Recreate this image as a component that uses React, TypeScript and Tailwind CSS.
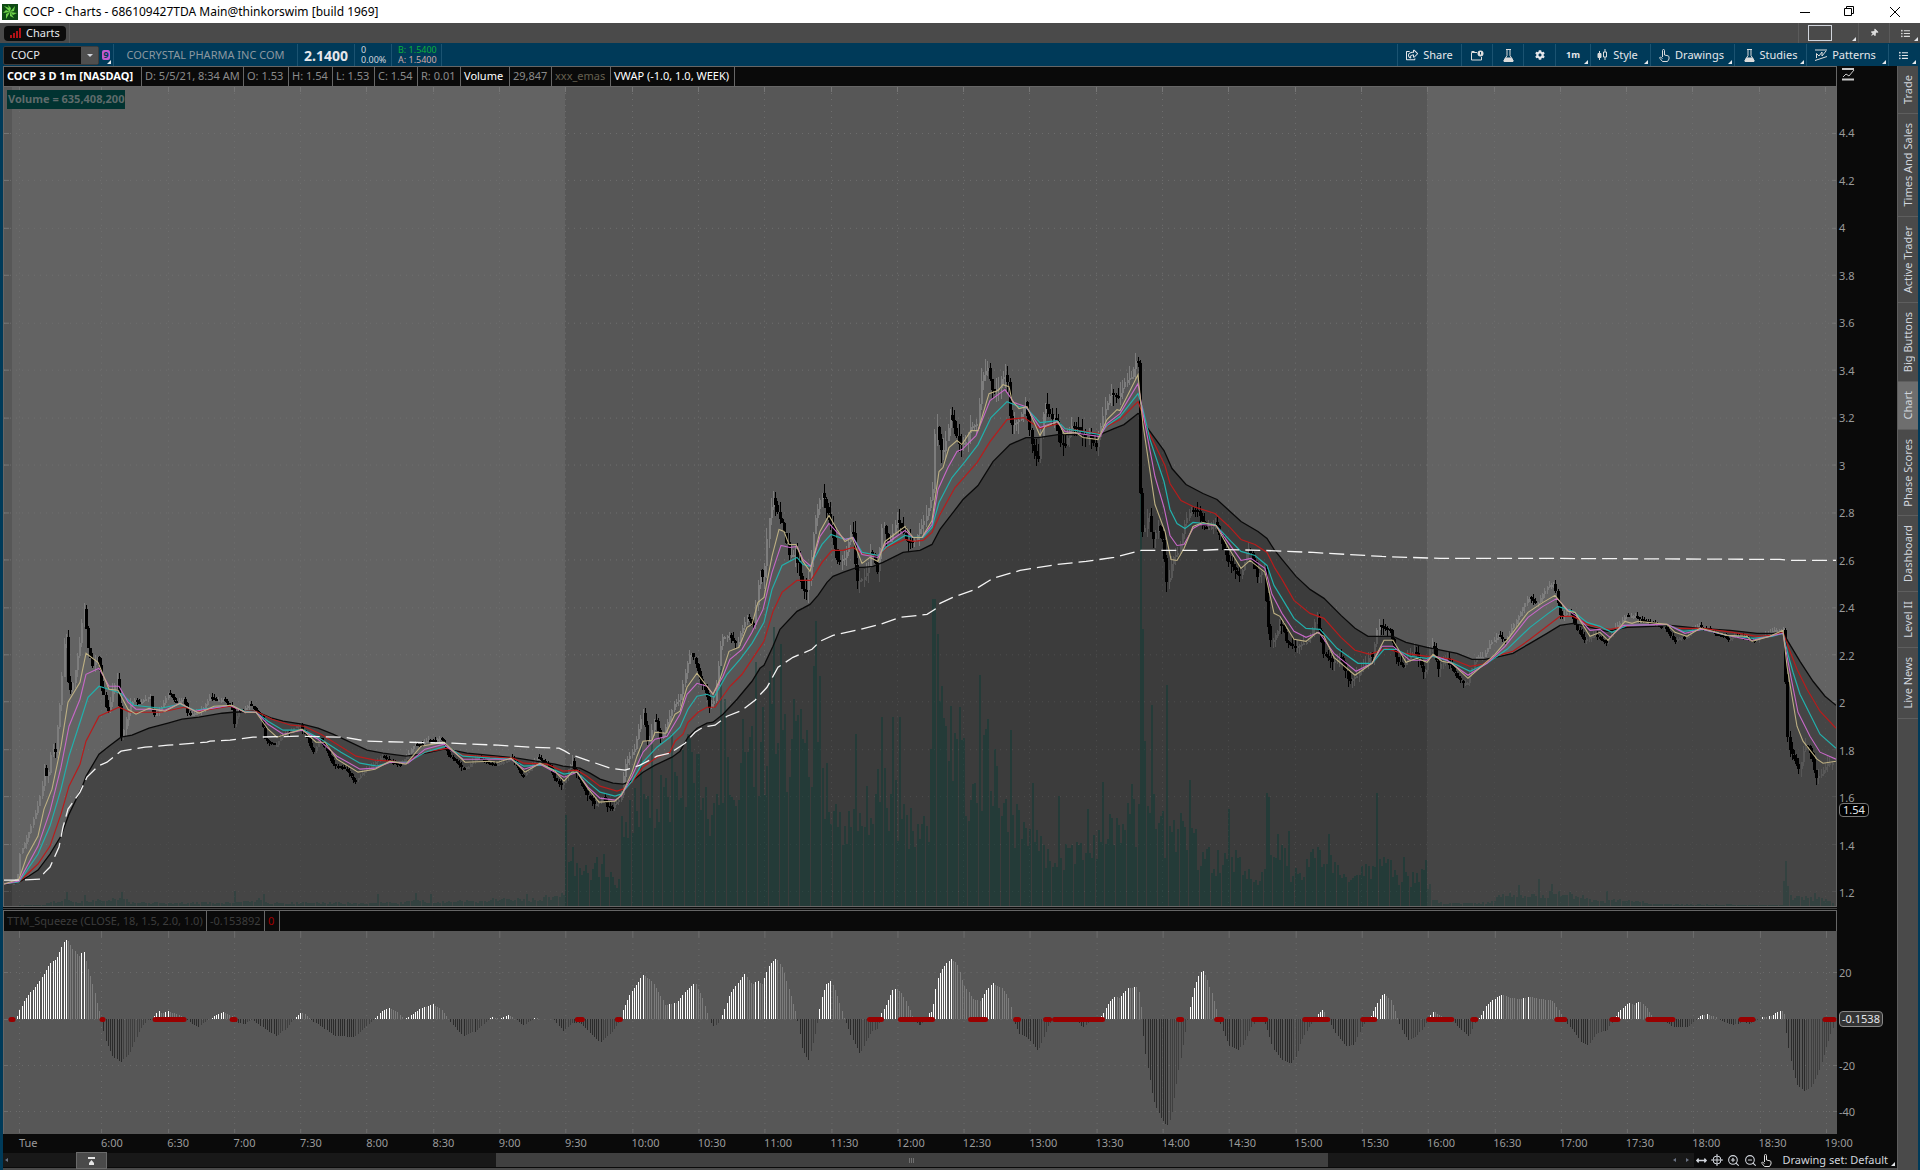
import React from 'react';
import {
  FaCog,
  FaListUl,
  FaRegHandPointUp,
  FaRegShareSquare,
  FaThumbtack,
  FaArrowsAltH,
} from 'react-icons/fa';
import { ZoomIn, ZoomOut } from 'lucide-react';

// chart series, x / y in chart space
const EMA_SLOW =
  '4,885 19,883 29,877 38,871 50,855 61,837 69,815 82,788 86,777 99,755 109,747 121,738 132,736 149,729 168,724 182,720 199,718 222,714 233,713 253,712 260,714 272,719 283,722 302,725 318,729 333,735 348,742 367,751 383,754 406,757 421,755 444,750 452,751 467,754 498,757 517,759 536,762 555,765 563,767 572,768 580,769 590,774 600,780 613,784 623,785 632,782 643,773 655,766 672,758 680,752 688,738 697,729 707,724 713,723 723,715 737,700 752,682 760,669 764,666 773,647 780,630 797,612 810,605 818,596 827,583 833,577 843,573 857,568 863,568 873,567 883,563 903,553 920,551 932,545 940,530 950,517 963,500 978,486 993,462 1010,445 1026,438 1038,438 1058,435 1079,435 1100,435 1114,429 1124,425 1138,414 1141,415 1145,425 1164,451 1172,469 1186,485 1203,494 1217,500 1229,511 1241,522 1258,532 1267,539 1274,550 1282,560 1296,577 1310,590 1324,599 1341,616 1355,629 1368,637 1393,637 1406,643 1427,648 1437,650 1457,654 1472,660 1485,660 1500,657 1513,654 1530,644 1547,634 1560,626 1573,624 1587,627 1607,632 1627,628 1653,627 1670,626 1700,629 1730,631 1757,634 1773,634 1783,633 1788,642 1800,662 1813,682 1825,697 1836,706';
const EMA_RED =
  '4,885 19,883 38,865 50,847 61,815 69,787 80,765 86,742 99,717 119,708 130,713 161,713 184,708 199,712 230,707 245,712 256,712 272,720 291,726 304,727 321,735 337,745 356,757 375,761 406,763 425,753 448,749 463,756 494,758 513,759 524,764 547,765 563,772 577,771 587,777 600,787 617,792 623,790 632,783 643,768 657,758 670,753 675,742 683,735 688,723 698,713 707,708 715,708 730,687 742,675 752,660 764,642 773,612 782,593 797,581 811,581 822,563 832,551 843,551 853,548 862,554 878,556 887,548 905,540 913,542 923,541 932,533 940,515 955,488 977,463 990,442 1007,420 1024,418 1040,429 1058,424 1065,429 1100,434 1107,427 1120,420 1138,402 1141,410 1145,425 1165,466 1170,484 1181,501 1193,507 1215,514 1229,527 1241,540 1255,545 1267,553 1275,569 1282,580 1294,601 1310,614 1324,619 1341,638 1355,651 1370,655 1386,649 1399,653 1413,655 1427,657 1433,657 1452,660 1470,667 1483,665 1495,657 1513,652 1530,640 1547,627 1560,617 1573,617 1590,626 1610,630 1630,626 1667,625 1677,629 1703,629 1733,633 1757,637 1773,636 1783,633 1788,647 1797,670 1807,690 1820,712 1836,729';
const EMA_CYAN =
  '4,885 19,883 38,855 50,827 61,790 69,757 80,723 88,698 99,687 115,692 122,695 134,706 161,709 180,705 195,711 230,706 245,712 256,713 268,722 283,731 304,731 321,740 341,753 360,764 377,767 390,763 408,763 425,753 446,747 463,757 490,759 511,760 524,767 543,766 564,775 577,773 588,783 600,793 615,797 621,795 632,782 643,763 657,748 670,738 680,728 688,710 697,697 707,695 714,698 727,675 740,660 752,644 764,623 772,590 782,566 797,558 803,565 810,567 822,545 831,535 845,540 853,538 862,553 878,556 887,547 905,536 913,538 923,538 932,528 939,503 952,478 965,462 978,445 991,418 1007,402 1019,407 1026,408 1040,423 1057,421 1065,429 1100,435 1107,426 1120,417 1138,394 1143,410 1150,440 1164,482 1170,510 1177,524 1185,529 1193,523 1215,525 1231,542 1241,552 1255,556 1267,566 1274,586 1282,599 1294,619 1306,629 1320,630 1337,649 1358,664 1372,664 1384,650 1396,650 1410,657 1427,659 1433,657 1447,661 1470,672 1487,664 1507,650 1530,628 1547,615 1558,607 1573,612 1587,623 1600,627 1612,633 1627,626 1667,625 1683,632 1703,630 1727,636 1753,639 1772,637 1783,634 1788,655 1793,673 1800,695 1810,715 1820,735 1836,749';
const EMA_PINK =
  '4,885 19,882 38,847 50,812 61,768 69,727 80,700 86,675 99,669 109,687 119,687 128,703 136,710 149,710 165,711 180,704 195,712 230,706 245,713 256,713 268,725 283,735 302,731 318,740 337,757 360,770 375,769 390,763 408,764 425,750 444,745 463,760 511,760 524,770 540,765 564,778 577,773 588,788 600,799 615,801 621,797 632,777 643,753 655,740 667,737 680,715 687,695 697,684 707,687 713,695 723,677 730,660 742,650 752,633 763,610 772,573 781,546 790,548 797,547 803,560 811,567 820,537 829,524 837,533 845,540 853,538 862,555 878,558 885,545 905,531 913,538 922,538 932,525 938,490 948,468 957,452 962,450 976,436 990,401 1005,390 1014,403 1026,407 1040,428 1057,422 1065,432 1100,437 1107,424 1120,414 1138,384 1143,414 1155,477 1164,508 1170,536 1177,546 1184,545 1193,529 1200,525 1216,526 1231,547 1241,561 1251,559 1265,569 1272,595 1282,614 1294,632 1306,638 1319,633 1334,654 1356,672 1372,664 1382,647 1393,647 1410,661 1427,661 1433,656 1447,661 1468,676 1487,664 1505,647 1528,618 1543,607 1557,599 1568,611 1577,617 1590,631 1600,630 1610,638 1623,626 1667,625 1685,634 1702,630 1727,636 1752,641 1783,634 1787,657 1792,683 1798,713 1810,737 1820,753 1836,760';
const EMA_FAST =
  '4,885 19,880 27,857 38,837 44,810 52,790 61,747 68,703 80,683 86,654 98,663 109,690 118,691 128,710 136,715 149,709 165,712 180,704 199,714 214,707 232,706 245,713 256,713 268,730 277,738 302,730 316,743 325,743 337,760 358,773 375,770 390,762 406,765 421,747 444,743 465,763 490,762 498,763 511,759 525,773 540,764 555,772 564,782 572,773 577,773 587,788 599,803 615,802 622,795 632,773 637,757 643,742 652,741 655,733 666,734 675,715 680,712 687,688 697,674 713,695 720,680 729,652 739,648 747,628 752,625 758,603 764,598 772,557 779,530 784,532 789,545 796,545 803,562 810,572 820,532 829,516 837,530 845,542 852,538 862,564 870,558 878,562 885,542 905,527 913,538 922,538 932,521 939,472 943,468 949,448 957,441 962,445 971,431 978,431 989,394 998,391 1003,385 1009,387 1012,401 1019,409 1027,407 1040,436 1045,427 1058,422 1064,434 1076,433 1083,438 1098,440 1107,420 1117,410 1120,411 1138,375 1143,425 1155,505 1165,532 1171,560 1177,561 1184,549 1193,527 1203,523 1216,526 1229,549 1241,569 1250,561 1265,573 1274,614 1280,617 1294,640 1306,642 1317,633 1324,637 1334,658 1355,676 1372,664 1384,641 1393,641 1406,663 1417,659 1427,663 1433,655 1442,662 1452,664 1468,679 1477,671 1495,655 1510,637 1528,613 1543,603 1555,596 1568,612 1575,613 1590,637 1600,633 1608,641 1625,622 1632,624 1638,622 1667,625 1675,633 1687,637 1700,629 1713,632 1727,636 1747,637 1752,642 1770,637 1783,631 1787,667 1797,727 1803,742 1817,760 1823,764 1836,762';
const VWAP =
  '4,881 20,881 40,880 44,874 50,868 59,848 63,828 68,810 80,793 87,778 98,767 107,763 121,752 145,748 168,746 207,743 210,742 230,741 253,738 299,737 344,738 367,742 406,743 452,744 498,746 532,748 559,749 565,752 570,755 590,762 610,769 625,771 640,766 657,757 670,754 685,744 695,733 703,728 715,726 727,717 742,711 755,701 767,688 778,668 793,658 812,650 820,642 833,636 860,630 880,625 900,618 927,615 935,610 940,604 953,598 975,590 993,579 1020,571 1057,565 1086,562 1114,558 1141,551 1200,551 1220,550 1265,551 1313,553 1382,557 1440,559 1550,559 1780,560 1790,561 1836,561';
const PRICE =
  '12,885 17,877 19,855 24,843 30,832 37,812 42,785 44,765 47,783 52,745 54,765 56,735 60,700 64,645 66,640 67,680 71,690 76,665 80,640 83,605 88,650 92,668 98,657 101,690 107,715 112,690 117,680 121,735 127,712 134,700 140,705 150,700 153,720 160,710 168,695 175,703 184,700 188,718 197,713 210,698 221,702 231,706 234,728 238,712 250,707 260,715 265,740 275,745 285,735 300,727 307,740 313,755 320,742 333,765 343,770 354,780 365,770 383,757 400,767 412,750 425,742 440,742 448,755 462,768 480,760 495,768 510,757 522,778 537,757 550,770 562,792 572,762 580,785 595,810 603,800 612,808 620,797 624,765 634,750 643,715 648,745 655,720 660,738 668,720 678,700 690,655 697,670 703,688 709,712 714,700 721,640 729,635 737,648 747,612 753,622 759,575 763,590 769,520 773,494 778,512 782,525 788,560 795,545 801,590 808,580 815,525 822,492 829,510 837,555 845,560 852,530 856,583 862,575 868,560 871,540 877,570 882,520 889,540 896,515 903,525 913,550 925,525 932,500 935,420 938,430 942,450 950,415 959,455 969,425 977,430 981,385 987,370 992,395 1000,375 1008,390 1010,430 1018,415 1025,405 1032,440 1038,450 1043,415 1055,415 1060,440 1070,430 1083,440 1090,430 1096,445 1103,410 1110,395 1118,405 1125,380 1136,362 1138,370 1140,500 1142,530 1148,510 1152,545 1158,520 1163,540 1167,590 1173,560 1180,540 1190,510 1197,515 1207,525 1216,520 1222,550 1229,570 1240,575 1247,550 1258,575 1264,575 1267,620 1271,638 1280,620 1286,645 1295,650 1305,642 1316,625 1324,650 1332,665 1340,660 1348,680 1360,665 1372,660 1377,620 1383,625 1390,640 1397,665 1402,672 1415,655 1425,668 1433,650 1438,675 1447,660 1455,675 1467,685 1475,662 1488,650 1498,635 1505,640 1513,625 1528,600 1538,605 1548,590 1554,588 1560,618 1570,615 1578,635 1585,645 1595,635 1607,645 1615,630 1625,615 1640,622 1665,626 1673,640 1685,638 1698,623 1715,637 1740,638 1750,643 1770,635 1783,628 1786,700 1787,735 1790,750 1795,755 1798,765 1804,745 1812,760 1816,775 1822,768 1835,762';
const VOLUME_BASE =
  '4,907 38,906 66,900 72,904 120,899 130,904 228,904 240,903 262,900 268,904 400,904 416,900 430,904 515,900 530,901 555,897 563,895 565,850 580,872 600,868 618,885 620,830 632,808 660,805 690,775 700,790 710,815 718,770 735,810 745,780 760,740 790,735 812,775 822,770 836,825 870,810 880,790 905,820 912,835 928,820 934,680 945,745 965,780 975,800 985,750 1000,810 1015,825 1030,835 1050,862 1080,855 1100,840 1130,825 1150,800 1165,835 1190,825 1200,862 1230,860 1260,880 1270,840 1290,870 1320,860 1340,875 1380,865 1400,878 1426,878 1428,895 1440,904 1490,904 1500,896 1515,898 1560,893 1580,898 1600,903 1625,900 1650,905 1782,906 1785,880 1792,898 1820,900 1836,905';
const VOLUME_SPIKES =
  '66,893 84,896 121,893 234,892 263,895 378,895 415,894 430,895 525,895 565,816 603,855 640,745 652,745 672,735 687,735 690,740 697,755 720,667 725,700 743,720 756,663 762,708 769,672 774,628 780,645 800,710 813,667 816,622 820,677 855,735 882,718 893,718 900,718 933,600 935,600 937,635 941,687 950,707 959,708 979,676 986,730 995,750 1010,731 1032,784 1059,797 1087,810 1103,783 1132,785 1140,480 1143,630 1145,742 1151,706 1167,686 1189,781 1229,810 1266,794 1269,798 1289,832 1328,835 1377,794 1403,858 1426,861 1430,885 1518,886 1538,880 1552,885 1607,892 1784,882 1786,862 1788,887 1815,894';
const MOMENTUM =
  '16,0 19,8 25,20 35,32 45,47 50,56 56,60 63,76 67,80 72,71 79,63 83,69 87,53 92,37 97,15 101,0 105,-20 112,-37 121,-43 130,-33 140,-10 148,-1 152,0 158,8 162,5 167,8 180,4 186,0 192,-5 198,-8 206,-2 211,1 222,7 232,3 236,-3 244,-5 252,-1 262,-8 276,-17 287,-9 293,-1 297,3 301,7 307,3 311,-1 322,-8 335,-17 354,-18 365,-8 373,-1 377,3 382,8 388,11 396,8 404,0 408,2 418,9 432,15 441,10 449,-1 456,-10 464,-17 476,-12 488,-1 491,2 499,0 508,4 515,0 523,-6 532,-1 535,1 540,0 553,0 558,-6 563,-12 572,-4 580,-4 590,-14 600,-24 612,-13 620,-2 622,7 627,19 632,29 638,37 642,44 648,41 654,35 665,14 676,16 685,27 695,36 702,22 707,5 710,-3 714,-8 720,-1 723,6 730,26 737,35 744,45 750,37 753,35 757,38 762,35 769,54 776,61 783,50 790,25 796,5 798,-5 802,-30 808,-42 814,-20 818,0 821,20 826,35 831,38 836,27 843,3 846,-4 852,-20 860,-35 866,-22 873,-11 878,-10 881,5 886,15 893,30 897,30 902,25 910,9 914,-2 919,-6 924,-2 927,5 931,8 936,40 941,50 949,60 956,56 962,35 972,20 979,18 984,27 991,36 1001,31 1008,20 1012,0 1018,-15 1028,-20 1037,-32 1042,-20 1047,-7 1051,-1 1056,2 1075,2 1079,-6 1083,-8 1088,-3 1097,0 1101,4 1108,17 1114,23 1118,21 1127,31 1137,32 1140,11 1141,-8 1145,-40 1152,-80 1159,-98 1166,-107 1170,-98 1176,-60 1182,-25 1186,-3 1188,10 1192,28 1198,45 1201,49 1205,42 1211,25 1217,2 1221,-10 1228,-27 1237,-31 1242,-25 1250,-8 1255,-2 1259,0 1264,-5 1272,-30 1280,-40 1289,-45 1295,-38 1300,-22 1308,-8 1313,-1 1317,5 1322,10 1327,-1 1335,-15 1345,-27 1353,-26 1361,-8 1369,2 1375,14 1382,26 1390,19 1396,2 1400,-10 1407,-21 1414,-18 1422,-9 1427,0 1432,8 1440,3 1450,0 1455,-6 1468,-18 1474,-3 1480,3 1485,14 1493,20 1501,25 1508,21 1519,20 1529,22 1540,20 1552,18 1558,8 1564,-3 1570,-9 1580,-23 1587,-26 1596,-14 1606,-11 1612,-2 1618,8 1627,16 1633,14 1638,18 1645,12 1652,2 1662,-1 1672,-8 1686,-8 1694,-2 1699,3 1706,5 1714,2 1720,-2 1732,-6 1742,-3 1747,-5 1757,-1 1761,2 1770,3 1780,9 1783,5 1785,-13 1789,-40 1796,-66 1803,-72 1810,-68 1818,-52 1825,-28 1832,-8 1835,0';
const SQUEEZE = [
  [9, 15], [100, 105], [153, 186], [230, 237], [575, 584], [615, 622],
  [867, 883], [898, 934], [968, 987], [1013, 1020], [1043, 1051],
  [1052, 1104], [1176, 1183], [1214, 1223], [1251, 1267], [1302, 1329],
  [1360, 1376], [1426, 1453], [1470, 1477], [1554, 1566], [1609, 1619],
  [1645, 1674], [1738, 1754], [1822, 1835],
];

const STEP = 2.21;
const FIRST_TICK = 101.2;

const parse = (s: string) => s.split(' ').map((p) => p.split(',').map(Number));

const sample = (pts: number[][], x: number) => {
  if (x <= pts[0][0]) return pts[0][1];
  for (let i = 1; i < pts.length; i++) {
    const [x1, y1] = pts[i];
    const [x0, y0] = pts[i - 1];
    if (x <= x1) return y0 + ((y1 - y0) * (x - x0)) / (x1 - x0);
  }
  return pts[pts.length - 1][1];
};

// repeatable noise in 0..1
const noise = (n: number) => {
  const v = Math.sin(n * 127.1 + 31.7) * 43758.5453;
  return v - Math.floor(v);
};

// slower noise, so that bars come in short runs of one colour
const drift = (i: number) => {
  const k = Math.floor(i / 3);
  const f = i / 3 - k;
  return noise(k) * (1 - f) + noise(k + 1) * f - 0.5;
};

const barXs = Array.from({ length: 824 }, (_, i) => 12.8 + i * STEP);

const pricePts = parse(PRICE);
const candles = barXs.map((x, i) => {
  let vol = 4;
  if (x < 130) vol = 8;
  else if (x > 560 && x < 760) vol = 7;
  else if (x >= 760 && x < 1140) vol = 14;
  else if (x >= 1140 && x < 1450) vol = 10;
  else if (x > 1784) vol = 9;
  else if (x > 1450 && x < 1620) vol = 6;
  if (x < 24) vol = 1;
  const open = sample(pricePts, x - STEP) + drift(i) * vol * 1.6;
  const close = sample(pricePts, x) + drift(i + 1) * vol * 1.6;
  const top = Math.min(open, close);
  const bottom = Math.max(open, close);
  return {
    x: Math.round(x),
    top: Math.round(top),
    height: Math.max(2, Math.round(bottom - top)),
    high: Math.round(top - noise(i * 3) * vol * 0.9),
    low: Math.round(bottom + noise(i * 7) * vol * 0.9),
    up: close < open,
  };
});

const volumePts = parse(VOLUME_BASE);
const spikes = parse(VOLUME_SPIKES);
const volumes = barXs.map((x, i) => {
  const base = 907 - sample(volumePts, x);
  const spike = spikes.find((s) => Math.abs(s[0] - x) <= STEP / 2);
  const h = spike ? 907 - spike[1] : base * (0.65 + noise(i * 5) * 0.65);
  const regular = x >= 564 && x < 1427;
  return { x: Math.round(x), h: Math.round(h), opacity: regular ? 0.4 : 0.25 };
});

const momentumPts = parse(MOMENTUM);
const momentum = barXs.map((x) => {
  const v = Math.round(sample(momentumPts, x));
  const prev = Math.round(sample(momentumPts, x - STEP));
  let color = '#7c7c7c';
  if (v >= 0 && v > prev) color = '#ffffff';
  if (v < 0) color = v <= prev ? '#2b2b2b' : '#3f3f3f';
  return { x: Math.round(x), v, color };
});

const gridX = [19.5, ...Array.from({ length: 27 }, (_, i) => Math.round(FIRST_TICK + i * 66.3) + 0.5)];
const gridY = Array.from({ length: 17 }, (_, i) => Math.round(133 + i * 47.45) + 0.5);

const priceLabels = ['4.4', '4.2', '4', '3.8', '3.6', '3.4', '3.2', '3', '2.8', '2.6', '2.4', '2.2', '2', '1.8', '1.6', '1.4', '1.2'];
const timeLabels = Array.from({ length: 27 }, (_, i) => `${6 + Math.floor(i / 2)}:${i % 2 ? '30' : '00'}`);

const headerCells = [
  { text: 'COCP 3 D 1m [NASDAQ]', cls: 'w-[138px] font-bold text-white' },
  { text: 'D: 5/5/21, 8:34 AM', cls: 'w-[102px] text-[#8a8a8a]' },
  { text: 'O: 1.53', cls: 'w-[45px] text-[#8a8a8a]' },
  { text: 'H: 1.54', cls: 'w-[44px] text-[#8a8a8a]' },
  { text: 'L: 1.53', cls: 'w-[42px] text-[#8a8a8a]' },
  { text: 'C: 1.54', cls: 'w-[43px] text-[#8a8a8a]' },
  { text: 'R: 0.01', cls: 'w-[43px] text-[#8a8a8a]' },
  { text: 'Volume', cls: 'w-[49px] text-white' },
  { text: '29,847', cls: 'w-[42px] text-[#8a8a8a]' },
  { text: 'xxx_emas', cls: 'w-[59px] text-[#666050]' },
  { text: 'VWAP (-1.0, 1.0, WEEK)', cls: 'w-[124px] text-white' },
];

const sideTabs = ['Trade', 'Times And Sales', 'Active Trader', 'Big Buttons', 'Chart', 'Phase Scores', 'Dashboard', 'Level II', 'Live News'];

const Corner = () => (
  <span className="absolute right-[2px] bottom-[2px] border-b-4 border-l-4 border-b-gray-200 border-l-transparent" />
);

const FlaskIcon = () => (
  <svg width="11" height="13" viewBox="0 0 11 13" fill="none" stroke="#dcdcdc">
    <path d="M3 .5h5M4 .5v6L1 11.5h9L7 6.5v-6" />
    <path d="M2.5 9h6l1.5 2.5v1H1v-1z" fill="#dcdcdc" />
  </svg>
);

const StyleIcon = () => (
  <svg width="11" height="12" viewBox="0 0 11 12" stroke="#dcdcdc">
    <path d="M2.5 2v9" />
    <path d="M1 4.5h3v4H1z" fill="#dcdcdc" />
    <path d="M8 0v3M8 8v3" />
    <path d="M6.5 3h3v5h-3z" fill="none" />
  </svg>
);

const PatternsIcon = () => (
  <svg width="12" height="12" viewBox="0 0 12 12" fill="none" stroke="#dcdcdc">
    <path d="M0 1h12M0 11.5L12 7.5M1.5 9V4.500L4 7l3-4v4l4-5" />
  </svg>
);

const NoteIcon = () => (
  <svg width="13" height="11" viewBox="0 0 13 11" fill="none" stroke="#dcdcdc">
    <path d="M6 2.5H.5v7.5h10V7M.5 1.5h3" />
    <circle cx="9.5" cy="3.5" r="3" fill="#dcdcdc" stroke="none" />
    <path d="M9.5 2v2.5" stroke="#003a59" />
  </svg>
);

const HandIcon = () => (
  <svg width="11" height="13" viewBox="0 0 11 13" fill="none" stroke="#dcdcdc" strokeLinejoin="round">
    <path d="M3.500 8V1.500a1 1 0 0 1 2 0V6l3.500.800q1 .3 1 1.200v2L8.500 12.500h-5L1 9.500q-.6-1 .3-1.500l2.200 1.500" />
  </svg>
);

const LogoIcon = () => (
  <svg width="16" height="16" viewBox="0 0 16 16" className="mx-[2px]">
    <rect width="16" height="16" fill="#0f4a14" />
    <path d="M8 8L6 1l3 3zM8 8l5-6-1 5zM8 8l7 1-4 2zM8 8l4 6-4-2zM8 8l-4 7 0-5zM8 8L1 9l3-3zM8 8L2 2l5 2z" fill="#6fd44a" />
  </svg>
);

const TitleBar = () => (
  <header className="flex h-[23px] shrink-0 items-center bg-white">
    <LogoIcon />
    <h1 className="ml-[3px] flex-1 text-[12px] text-black">
      COCP - Charts - 686109427TDA Main@thinkorswim [build 1969]
    </h1>
    <button aria-label="Minimize" className="flex h-full w-[45px] items-center justify-center">
      <svg width="10" height="10" stroke="black"><path d="M0 5.5h10" /></svg>
    </button>
    <button aria-label="Restore" className="flex h-full w-[45px] items-center justify-center">
      <svg width="11" height="11" fill="none" stroke="black"><path d="M.5 2.5h7v7h-7zM2.5 2.5v-2h7v7h-2" /></svg>
    </button>
    <button aria-label="Close" className="mr-[2px] flex h-full w-[46px] items-center justify-center">
      <svg width="10" height="10" stroke="black"><path d="M0 0l10 10M10 0L0 10" /></svg>
    </button>
  </header>
);

const TabBar = () => (
  <div className="flex h-5 shrink-0 justify-between bg-[#4a4a4a]">
    <div className="flex items-center border-r border-[#5a5a5a] pr-[3px] pl-1">
      <button className="flex h-[15px] items-center gap-[5px] rounded bg-[#0c0c0c] px-[6px] text-[11px] text-gray-200">
        <svg width="11" height="10" fill="#b31217">
          <path d="M0 7h2v3H0zM3 5h2v5H3zM6 3h2v7H6zM9 0h2v10H9z" />
        </svg>
        Charts
      </button>
    </div>
    <div className="flex">
      <button aria-label="Layout" className="relative flex w-[60px] items-center border-l border-[#5a5a5a] pl-[9px]">
        <span className="h-4 w-6 border border-gray-300" />
        <Corner />
      </button>
      <button aria-label="Pin" className="flex w-[31px] items-center justify-center border-l border-[#5a5a5a]">
        <FaThumbtack size={8} color="#dcdcdc" className="rotate-45" />
      </button>
      <button aria-label="Menu" className="relative flex w-[31px] items-center justify-center border-l border-[#5a5a5a]">
        <FaListUl size={9} color="#dcdcdc" />
        <Corner />
      </button>
    </div>
  </div>
);

const toolButton = 'relative flex items-center justify-center gap-[5px] border-l border-[#1b5371] text-[11px] text-gray-200';

const SymbolBar = () => (
  <div className="flex h-[23px] shrink-0 justify-between bg-[#003a59] px-[2px] pt-px">
    <div className="flex items-stretch">
      <div className="my-px ml-px flex h-[19px] w-24 items-center self-center rounded-xs border border-[#3c3c3c] bg-[#0d0d0d]">
        <input
          aria-label="Symbol"
          defaultValue="COCP"
          className="w-0 flex-1 bg-transparent pl-[7px] text-[11px] text-gray-200 outline-none"
        />
        <button aria-label="Symbol list" className="flex h-full w-[17px] items-center justify-center bg-[#4f4f4f]">
          <span className="border-x-3 border-t-3 border-x-transparent border-t-gray-300" />
        </button>
      </div>
      <button aria-label="Link group" className="relative flex w-[15px] items-center justify-center border-r border-[#1b5371]">
        <span className="w-2 rounded-xs bg-[#c05bd0] text-center text-[9px] leading-[10px] font-bold text-[#003a59]">9</span>
        <Corner />
      </button>
      <span className="flex w-[183px] items-center justify-center text-[11px] text-[#8b98a0]">
        COCRYSTAL PHARMA INC COM
      </span>
      <span className="flex w-[57px] items-center justify-center border-l border-[#1b5371] text-[14px] font-bold text-gray-200">
        2.1400
      </span>
      <span className="flex w-[37px] flex-col justify-center border-l border-[#1b5371] pl-1.5 text-[9px] leading-[10px] text-gray-300">
        <span>0</span>
        <span>0.00%</span>
      </span>
      <span className="flex w-[51px] flex-col justify-center border-x border-[#1b5371] pl-1.5 text-[9px] leading-[10px]">
        <span className="text-[#0cae3c]">B: 1.5400</span>
        <span className="text-[#cfa9a9]">A: 1.5400</span>
      </span>
    </div>
    <div className="flex items-stretch">
      <button className={`${toolButton} w-16`}><FaRegShareSquare size={12} />Share</button>
      <button aria-label="Note" className={`${toolButton} w-[31px]`}><NoteIcon /></button>
      <button aria-label="Lab" className={`${toolButton} w-[31px]`}><FlaskIcon /></button>
      <button aria-label="Settings" className={`${toolButton} w-8`}><FaCog size={10} /></button>
      <button className={`${toolButton} w-[35px]`}>
        <span className="text-[9px] font-bold">1m</span>
        <Corner />
      </button>
      <button className={`${toolButton} w-[60px] pr-[6px]`}><StyleIcon />Style<Corner /></button>
      <button className={`${toolButton} w-[84px] pr-[2px]`}><HandIcon />Drawings<Corner /></button>
      <button className={`${toolButton} w-[72px]`}><FlaskIcon />Studies<Corner /></button>
      <button className={`${toolButton} w-[82px] pr-[4px]`}><PatternsIcon />Patterns<Corner /></button>
      <button aria-label="Chart menu" className={`${toolButton} w-[30px]`}><FaListUl size={9} /><Corner /></button>
    </div>
  </div>
);

const PricePlot = () => (
  <svg className="block h-full w-full" viewBox="4 87 1832 820" preserveAspectRatio="none" fill="none">
    <rect x="4" y="87" width="1832" height="820" fill="#636363" />
    <rect x="4" y="87" width="8" height="820" fill="#575757" />
    <rect x="565" y="87" width="862" height="820" fill="#575757" />
    <g stroke="#6f6f6f" strokeDasharray="1 5">
      {gridX.map((x) => <path key={x} d={`M${x} 87V907`} />)}
      {gridY.map((y) => <path key={y} d={`M4 ${y}H1836`} />)}
    </g>
    <g stroke="#767676">
      {gridX.map((x) => <path key={x} d={`M${x} 87v5`} />)}
      {gridY.map((y) => <path key={y} d={`M4 ${y}h5M1836 ${y}h-4`} />)}
    </g>
    <g shapeRendering="crispEdges">
      {candles.filter((c) => c.up).map((c) => (
        <g key={c.x} fill="#7d7d7d">
          <rect x={c.x} y={c.high} width="1" height={c.low - c.high} />
          <rect x={c.x} y={c.top} width="2" height={c.height} />
        </g>
      ))}
    </g>
    <polygon points={`${EMA_SLOW} 1836,907 4,907`} fill="#000" fillOpacity="0.3" />
    <g shapeRendering="crispEdges">
      <g fill="#003a33">
        {volumes.map((v) => <rect key={v.x} x={v.x} y={907 - v.h} width="2" height={v.h} fillOpacity={v.opacity} />)}
      </g>
      {candles.filter((c) => !c.up).map((c) => (
        <g key={c.x} fill="#000">
          <rect x={c.x} y={c.high} width="1" height={c.low - c.high} />
          <rect x={c.x - 1} y={c.top} width="3" height={c.height} />
        </g>
      ))}
    </g>
    <polyline points={EMA_SLOW} stroke="#0a0a0a" strokeWidth="1.3" />
    <polyline points={EMA_RED} stroke="#b81c1c" strokeWidth="1.2" />
    <polyline points={EMA_CYAN} stroke="#22b0ac" strokeWidth="1.2" />
    <polyline points={EMA_PINK} stroke="#c868c8" strokeWidth="1.1" />
    <polyline points={EMA_FAST} stroke="#bdb083" strokeWidth="1.1" />
    <polyline points={VWAP} stroke="#f4f4f4" strokeWidth="1.3" strokeDasharray="15 6" />
  </svg>
);

const SqueezePlot = () => (
  <svg className="block h-full w-full" viewBox="4 931 1832 203" preserveAspectRatio="none" fill="none">
    <rect x="4" y="931" width="1832" height="203" fill="#575757" />
    <g stroke="#6c6c6c" strokeDasharray="1 5">
      {gridX.map((x) => <path key={x} d={`M${x} 931V1134`} />)}
      {[972.5, 1019.5, 1065.5, 1111.5].map((y) => <path key={y} d={`M4 ${y}H1836`} />)}
    </g>
    <g stroke="#6e6e6e">
      {gridX.map((x) => <path key={x} d={`M${x} 932v5M${x} 1129v4`} />)}
      {[972.5, 1019.5, 1065.5, 1111.5].map((y) => <path key={y} d={`M4 ${y}h4M1836 ${y}h-4`} />)}
    </g>
    <g shapeRendering="crispEdges">
      {momentum.map((m) => (
        <rect key={m.x} x={m.x} y={m.v > 0 ? 1019 - m.v : 1019} width="1" height={Math.abs(m.v)} fill={m.color} />
      ))}
    </g>
    <g stroke="#990000" strokeWidth="5" strokeLinecap="round">
      {SQUEEZE.map(([a, b]) => <path key={a} d={`M${a + 2} 1019.5H${b - 2}`} />)}
    </g>
  </svg>
);

const SideTabs = () => (
  <nav className="flex w-[21px] shrink-0 flex-col border-l border-[#5e5e5e] bg-[#4a4a4a]">
    {sideTabs.map((tab) => (
      <button
        key={tab}
        className={`flex w-full items-center justify-center border-b border-[#5e5e5e] py-[9px] text-[11px] leading-[16px] text-gray-300 ${tab === 'Chart' ? 'bg-[#6e6e6e]' : ''}`}
      >
        <span className="rotate-180 [writing-mode:vertical-rl]">{tab}</span>
      </button>
    ))}
  </nav>
);

const BottomBar = () => (
  <footer className="flex h-[18px] shrink-0 border-b-2 border-[#4a4a4a] text-gray-300">
    <div className="mt-px flex h-[14px] flex-1 items-stretch bg-[#181818]">
      <button aria-label="Scroll back" className="flex w-[73px] items-center pl-[2px]">
        <span className="border-y-2 border-r-3 border-y-transparent border-r-gray-500" />
      </button>
      <button aria-label="Expand" className="-mt-px flex h-[17px] w-[31px] items-center justify-center border border-[#6a6a6a] bg-[#4a4a4a]">
        <svg width="7" height="8" fill="#e5e5e5"><path d="M0 0h7v2H0zM3.5 3L6 6H1zM1 6h5v2H1z" /></svg>
      </button>
      <div className="flex-[390]" />
      <div className="flex flex-[835] items-center justify-center bg-[#404040]">
        <svg width="5" height="5" stroke="#707070"><path d="M.5 0v5M2.5 0v5M4.5 0v5" /></svg>
      </div>
      <div className="flex flex-[362] items-center justify-end gap-[10px] pr-[5px]">
        <button aria-label="Left" className="border-y-2 border-r-3 border-y-transparent border-r-gray-500" />
        <button aria-label="Right" className="border-y-2 border-l-3 border-y-transparent border-l-gray-500" />
      </div>
    </div>
    <div className="relative flex w-[203px] items-center gap-1 pl-[2px]">
      <button aria-label="Fit width"><FaArrowsAltH size={11} /></button>
      <button aria-label="Crosshair">
        <svg width="12" height="12" fill="none" stroke="currentColor">
          <circle cx="6" cy="6" r="4" />
          <path d="M6 0v12M0 6h12" />
        </svg>
      </button>
      <button aria-label="Zoom in"><ZoomIn size={13} /></button>
      <button aria-label="Zoom out"><ZoomOut size={13} /></button>
      <button aria-label="Pointer"><HandIcon /></button>
      <span className="ml-auto pr-[9px] text-[11px]">Drawing set: Default</span>
      <Corner />
    </div>
  </footer>
);

const App = () => {
  return (
    <div className="flex h-screen min-h-[600px] flex-col overflow-hidden bg-[#0a0a0a] font-['Noto_Sans','Open_Sans',sans-serif]">
      <TitleBar />
      <TabBar />
      <SymbolBar />
      <div className="flex min-h-0 flex-1 border-r-2 border-l-3 border-[#003a59]">
        <main className="flex min-w-0 flex-1 flex-col">
          <section className="flex min-h-0 flex-1">
            <div className="flex min-w-0 flex-1 flex-col border-r border-b border-l border-[#666]">
              <div className="flex h-[21px] shrink-0 border-y border-[#666] text-[11px]">
                {headerCells.map((cell) => (
                  <span key={cell.text} className={`flex items-center border-r border-[#666] pl-[3px] whitespace-nowrap ${cell.cls}`}>
                    {cell.text}
                  </span>
                ))}
              </div>
              <div className="relative min-h-0 flex-1">
                <PricePlot />
                <span className="absolute top-[3px] left-[3px] h-[19px] bg-[#013331] px-[1px] text-[11px] leading-[18px] font-bold text-[#5f6b6b]">
                  Volume = 635,408,200
                </span>
              </div>
            </div>
            <div className="relative flex w-[60px] flex-col justify-between pt-[59px] pb-[6px] pl-[2px] text-[11px] leading-[16px] text-[#9a9a9a]">
              <svg width="13" height="13" fill="none" stroke="#c8c8c8" className="absolute top-[2px] left-[5px]">
                <path d="M0 1h12M0 11.5h12" strokeWidth="2" />
                <path d="M1 9l3-3 3 2 5-6" />
              </svg>
              {priceLabels.map((label) => <span key={label}>{label}</span>)}
              <span className="absolute bottom-[90px] left-[2px] rounded border border-[#777] bg-black px-[3px] leading-[12px] text-gray-200">1.54</span>
            </div>
          </section>
          <div className="mr-[60px] h-1 shrink-0 border-b border-[#666]">
            <div className="mt-px border-b border-[#444]" />
          </div>
          <section className="flex h-[223px] shrink-0">
            <div className="flex min-w-0 flex-1 flex-col">
              <div className="flex h-5 shrink-0 border-r border-l border-[#666] text-[11px] text-[#3d3d3d]">
                <span className="flex w-[203px] items-center border-r border-[#666] pl-[3px]">TTM_Squeeze (CLOSE, 18, 1.5, 2.0, 1.0)</span>
                <span className="flex w-[58px] items-center border-r border-[#666] pl-[3px]">-0.153892</span>
                <span className="flex w-[15px] items-center border-r border-[#666] pl-[3px] text-[#a00000]">0</span>
              </div>
              <div className="min-h-0 flex-1 border-l border-[#666]">
                <SqueezePlot />
              </div>
            </div>
            <div className="flex w-[60px] flex-col items-start justify-between pt-[54px] pb-[14px] pl-[2px] text-[11px] leading-[16px] text-[#9a9a9a]">
              <span>20</span>
              <span className="rounded border border-[#888] bg-[#333] px-[2px] leading-[14px] text-gray-200">-0.1538</span>
              <span>-20</span>
              <span>-40</span>
            </div>
          </section>
          <div className="flex h-[18px] shrink-0 items-center pr-[6px] pl-4 text-[11px] text-[#9a9a9a]">
            <span className="w-[82px]">Tue</span>
            {timeLabels.map((label) => <span key={label} className="w-0 flex-1">{label}</span>)}
          </div>
          <BottomBar />
        </main>
        <SideTabs />
      </div>
    </div>
  );
};

export default App;
